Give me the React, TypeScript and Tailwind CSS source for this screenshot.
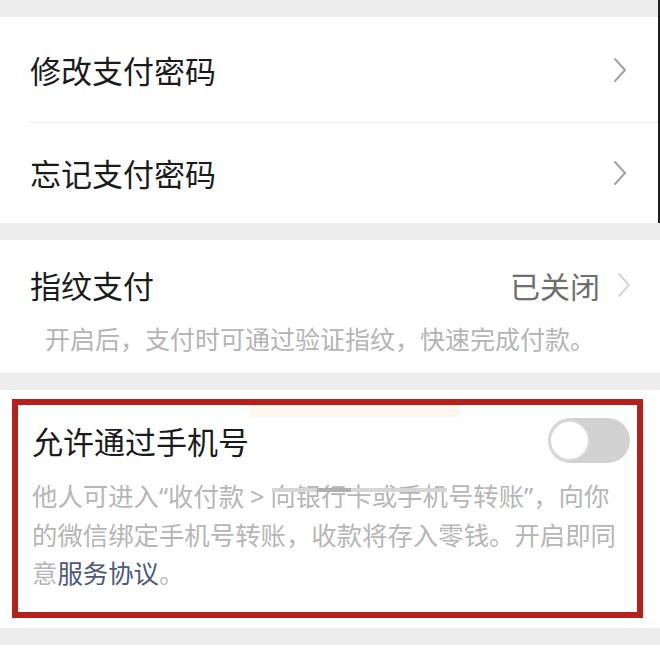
import React from "react";

const font = { fontFamily: '"Noto Sans CJK SC", "Noto Sans", sans-serif' };
const latin = { fontFamily: '"Noto Sans", "Liberation Sans", sans-serif' };

function Chevron({ color = "#a3a3a3" }: { color?: string }) {
  return (
    <svg width="16" height="26" viewBox="0 0 16 26" fill="none">
      <polyline
        points="3,2 13,13 3,24"
        stroke={color}
        strokeWidth="2"
        strokeLinecap="round"
        strokeLinejoin="round"
      />
    </svg>
  );
}

function Toggle() {
  return (
    <div className="w-[82px] h-[45px] rounded-full bg-[#d2d2d2] flex items-center pl-[1px]">
      <div className="w-[41px] h-[41px] rounded-full bg-white border-[2px] border-[#d9d9d9]" />
    </div>
  );
}

export default function App() {
  return (
    <div className="w-[660px] h-[662px] bg-white overflow-hidden" style={font}>
      {/* password rows */}
      <div className="border-r-[2px] border-[#1f1f1f]">
        <div className="h-[17px] bg-[#ededed]" />
        <div className="bg-white">
          <div className="h-[105px] flex items-center justify-between pl-[30px] pr-[30px]">
            <span className="text-[31px] leading-[40px] text-[#1b1b1b]">修改支付密码</span>
            <Chevron />
          </div>
          <div className="ml-[30px] h-px bg-[#ececec]" />
          <div className="h-[100px] flex items-center justify-between pl-[30px] pr-[30px]">
            <span className="text-[31px] leading-[40px] text-[#1b1b1b]">忘记支付密码</span>
            <Chevron />
          </div>
        </div>
      </div>

      <div className="h-[17px] bg-[#ededed]" />

      {/* fingerprint */}
      <div className="h-[133px] bg-white pt-[25px]">
        <div className="flex items-center justify-between pl-[30px] pr-[28px] h-[40px]">
          <span className="text-[31px] leading-[40px] text-[#1b1b1b]">指纹支付</span>
          <div className="flex items-center gap-[16px]">
            <span className="text-[30px] leading-[40px] text-[#6e6e6e]">已关闭</span>
            <Chevron color="#d6d6d6" />
          </div>
        </div>
        <div className="mt-[16px] pl-[45px] text-[25px] leading-[34px] text-[#b4b4b4] whitespace-nowrap">
          开启后，支付时可通过验证指纹，快速完成付款。
        </div>
      </div>

      <div className="h-[17px] bg-[#ededed]" />

      {/* phone number transfer */}
      <div className="bg-white pt-[9px] pb-[10px]">
        <div className="relative ml-[12px] mr-[17px] h-[219px] border-[6px] border-[#b51f1c]">
          <div className="absolute left-[232px] top-0 w-[210px] h-[12px] bg-[#fdf7ef]" />
          <div className="h-[71px] flex items-center justify-between pl-[14px] pr-[7px]">
            <span className="text-[31px] leading-[40px] text-[#1b1b1b]">允许通过手机号</span>
            <Toggle />
          </div>
          <div className="pl-[14px] text-[25.4px] leading-[38px] text-[#b6b6b6] whitespace-nowrap">
            <div>
              他人可进入<span style={latin}>“</span>收付款 <span style={latin}>&gt;</span> 向银行卡或手机号转账<span style={latin}>”</span>，向你
            </div>
            <div>的微信绑定手机号转账，收款将存入零钱。开启即同</div>
            <div>
              意<span className="text-[#4b5a7c]">服务协议</span>。
            </div>
          </div>
          <div className="absolute left-[254px] top-[83px] w-[175px] h-[4px] bg-[#d6d6d6]" />
          <div className="absolute left-[299px] top-[83px] w-[34px] h-[4px] bg-[#b0b0b0]" />
        </div>
      </div>

      <div className="h-[17px] bg-[#ededed]" />
    </div>
  );
}
